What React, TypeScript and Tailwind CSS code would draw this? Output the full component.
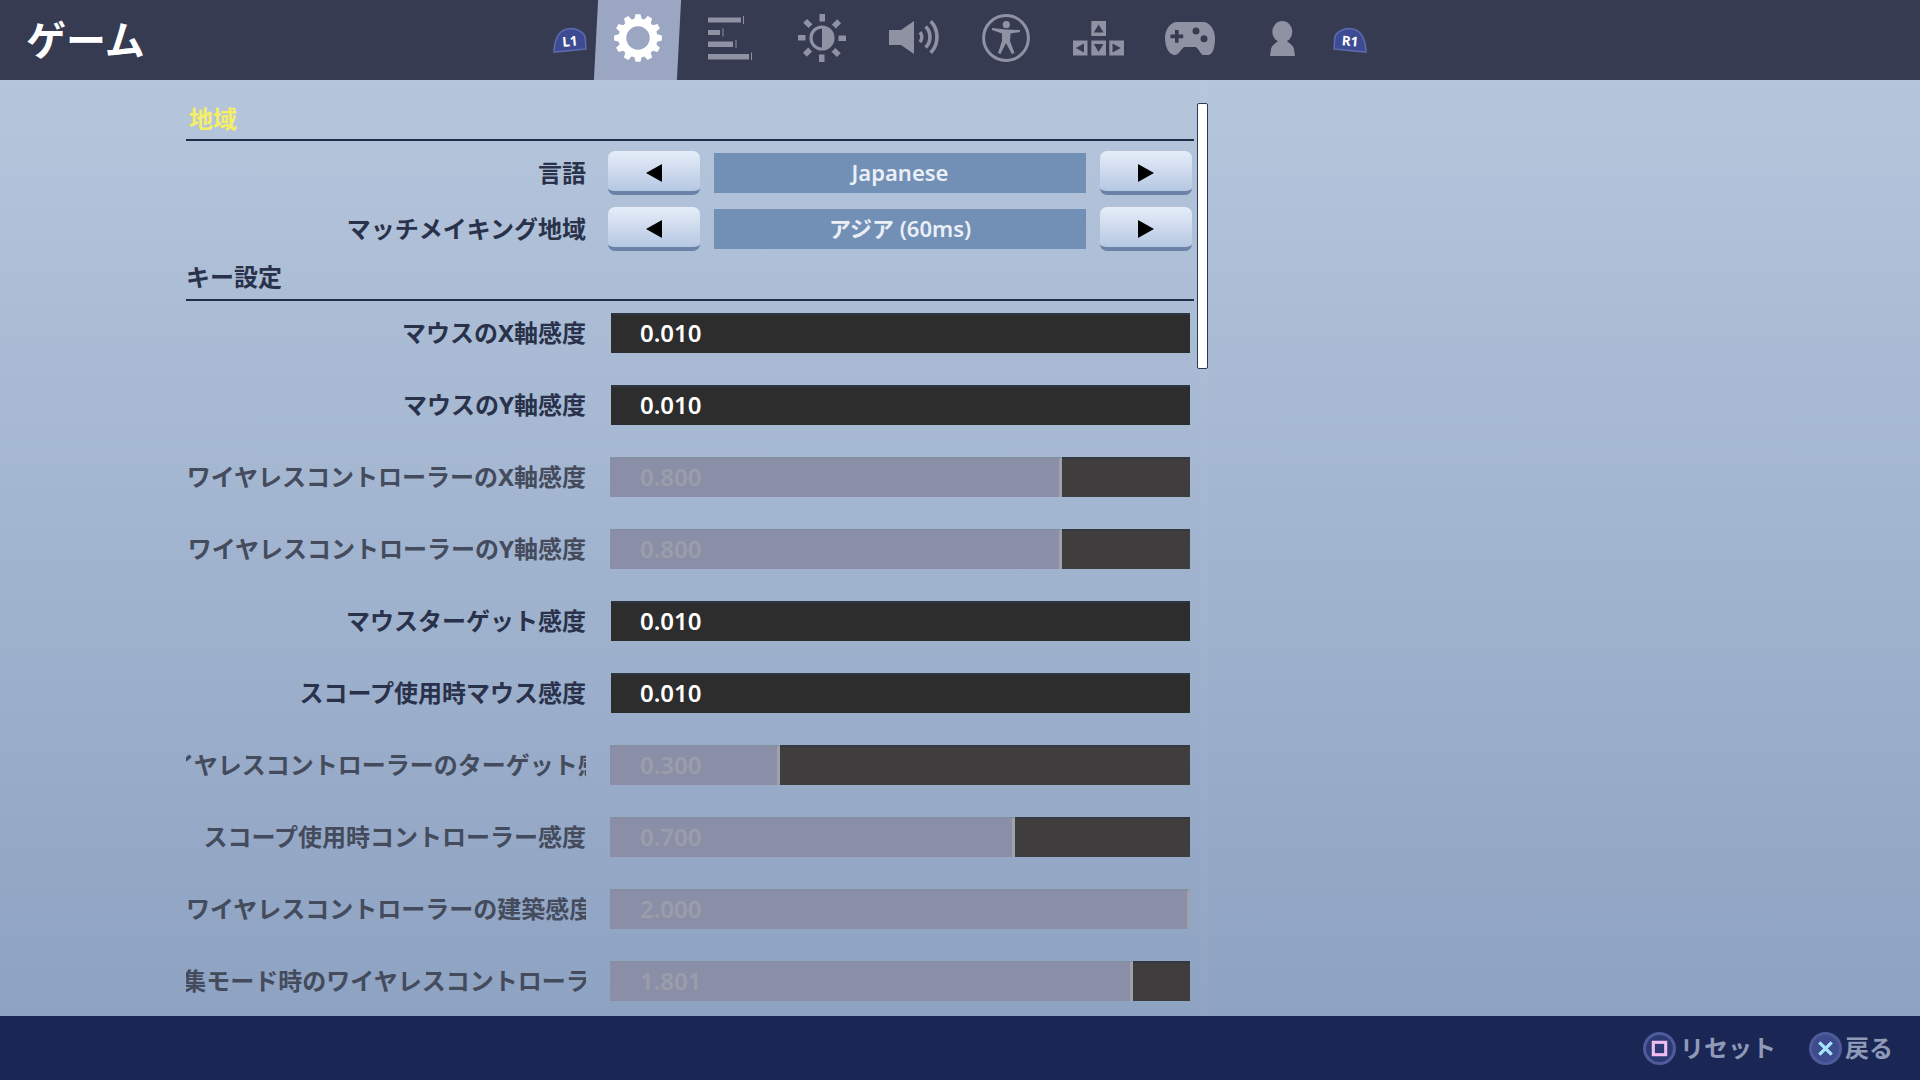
import React from "react";

const IC = "#8f92a3";
const HD = "#363b52";

function gearPath() {
  const teeth = 12;
  const c = 24;
  const ro = 24;
  const rr = 19.5;
  const pts: string[] = [];
  for (let i = 0; i < teeth; i++) {
    const a = (i / teeth) * Math.PI * 2;
    const s = (Math.PI * 2) / teeth;
    const seq: [number, number][] = [
      [rr, a - s * 0.36],
      [ro, a - s * 0.2],
      [ro, a + s * 0.2],
      [rr, a + s * 0.36],
    ];
    for (const [r, t] of seq) {
      pts.push(`${(c + r * Math.cos(t)).toFixed(2)} ${(c + r * Math.sin(t)).toFixed(2)}`);
    }
  }
  const hole = 11.7;
  return `M${pts.join(" L")} Z M${c - hole} ${c} a${hole} ${hole} 0 1 0 ${hole * 2} 0 a${hole} ${hole} 0 1 0 ${-hole * 2} 0 Z`;
}

const GearIcon = () => (
  <svg width="48" height="48" viewBox="0 0 48 48">
    <path d={gearPath()} fill="#ffffff" fillRule="evenodd" />
  </svg>
);

const BarsIcon = () => (
  <svg width="44" height="44" viewBox="0 0 44 44" fill={IC}>
    <rect x="0" y="1.5" width="33" height="5" />
    <rect x="35" y="0" width="1" height="8" />
    <rect x="0" y="14" width="12" height="5" />
    <rect x="14.5" y="12.5" width="1" height="8" />
    <rect x="0" y="25.5" width="25" height="5.5" />
    <rect x="27.5" y="24" width="1" height="8" />
    <rect x="0" y="38" width="41" height="5.5" />
    <rect x="43" y="36.5" width="1" height="7.5" />
  </svg>
);

const SunIcon = () => (
  <svg width="48" height="48" viewBox="0 0 48 48" fill={IC}>
    {[0, 45, 90, 135, 180, 225, 270, 315].map((d) => (
      <rect key={d} x="21.5" y="0" width="5.5" height="7.5" transform={`rotate(${d} 24 24)`} />
    ))}
    <circle cx="24" cy="24" r="11" fill="none" stroke={IC} strokeWidth="3.2" />
    <path d="M24 13 a11 11 0 0 1 0 22 Z" />
  </svg>
);

const SpeakerIcon = () => (
  <svg width="54" height="36" viewBox="0 0 54 36" fill="none">
    <path d="M0 10 H12 L25 1 V34 L12 25 H0 Z" fill={IC} />
    <g stroke={IC} strokeWidth="3.6">
      <path d="M31 12 A8 8 0 0 1 31 22" />
      <path d="M36.6 6.4 A15 15 0 0 1 36.6 27.6" />
      <path d="M41.7 1.2 A23 23 0 0 1 41.7 32.8" />
    </g>
  </svg>
);

const AccessIcon = () => (
  <svg width="48" height="48" viewBox="0 0 48 48" fill={IC}>
    <circle cx="24" cy="24" r="22.4" fill="none" stroke={IC} strokeWidth="3" />
    <circle cx="24.3" cy="10.7" r="3.6" />
    <polygon points="10,14 24,15.5 38,16 38,18 28.5,19.5 28,27 32.5,39 29.8,40 24,29 18.5,40 16,39 20,27 20,19.5 10,16" />
  </svg>
);

const ArrowsIcon = () => (
  <svg width="51" height="35" viewBox="0 0 51 35" fill={IC}>
    <rect x="18.3" y="0" width="14.7" height="15" />
    <rect x="0" y="19.5" width="14.5" height="15" />
    <rect x="18.3" y="19.5" width="14.7" height="15" />
    <rect x="36.3" y="19.5" width="14.7" height="15" />
    <polygon points="25.6,3.5 30.5,11.5 20.8,11.5" fill={HD} />
    <polygon points="2.8,27 11,22.5 11,31.5" fill={HD} />
    <polygon points="20.8,23 30.5,23 25.6,31" fill={HD} />
    <polygon points="47.8,27 39.5,22.5 39.5,31.5" fill={HD} />
  </svg>
);

const PadIcon = () => (
  <svg width="50" height="35" viewBox="0 0 50 35">
    <path
      d="M12 1 H38 C45 1 50 9 50 17 C50 26 48 34 43 34 H38 C36 34 33 26 30 26 H20 C17 26 14 34 10 34 C4 34 0 26 0 17 C0 9 5 1 12 1 Z"
      fill={IC}
    />
    <path d="M10 9 h3.6 v4.6 h4.6 v3.6 h-4.6 v4.6 h-3.6 v-4.6 h-4.6 v-3.6 h4.6 Z" fill={HD} />
    <circle cx="31" cy="10" r="3.5" fill={HD} />
    <circle cx="39" cy="17.7" r="3.5" fill={HD} />
  </svg>
);

const PersonIcon = () => (
  <svg width="25" height="35" viewBox="0 0 25 35" fill={IC}>
    <ellipse cx="12.3" cy="10.7" rx="10" ry="10.7" />
    <path d="M0 35 L1 28 C2 24 5 23 8 20 H17 C20 23 23 24 24 28 L25 35 Z" />
  </svg>
);

const Badge = ({ label, flip }: { label: string; flip?: boolean }) => (
  <svg width="34" height="26" viewBox="0 0 34 26" className="shrink-0">
    <path
      d="M1 25 C1.5 14 5 4 14 2 C22 0.5 29 4 32 9 L33 22 Z"
      fill="#3d4b92"
      stroke="#5d69aa"
      strokeWidth="1.6"
      transform={flip ? "translate(34 0) scale(-1 1)" : undefined}
    />
    <text
      x="17"
      y="19"
      textAnchor="middle"
      fontSize="13.5"
      fontWeight="700"
      fill="#ffffff"
      fontFamily="'Noto Sans', sans-serif"
      transform={flip ? "rotate(5 17 15)" : "rotate(-5 17 15)"}
    >
      {label}
    </text>
  </svg>
);

const Arrow = ({ right }: { right?: boolean }) => (
  <svg width="16" height="18" viewBox="0 0 16 18">
    <polygon points={right ? "0,0 16,9 0,18" : "16,0 0,9 16,18"} fill="#000000" />
  </svg>
);

const StepButton = ({ right }: { right?: boolean }) => (
  <div className="w-[92px] h-[44px] shrink-0 flex items-center justify-center pt-[3px] rounded-[7px] bg-gradient-to-b from-[#e6edf8] to-[#b6c8e3] border-b-[4px] border-b-[#6a81a8]">
    <Arrow right={right} />
  </div>
);

type Align = "end" | "center" | "start";

const Label = ({ text, dim, align = "end" }: { text: string; dim?: boolean; align?: Align }) => (
  <div
    className={`w-[400px] shrink-0 overflow-hidden flex ${
      align === "center" ? "justify-center" : align === "start" ? "justify-start" : "justify-end"
    } text-[24px] leading-[40px] font-bold whitespace-nowrap ${dim ? "text-[#444b5c]" : "text-[#29324a]"}`}
  >
    <span className="shrink-0">{text}</span>
  </div>
);

const SelectRow = ({ label, value }: { label: string; value: string }) => (
  <div className="flex items-start h-[44px]">
    <div className="h-[44px] flex items-center">
      <Label text={label} />
    </div>
    <div className="ml-[22px] flex items-start gap-[14px]">
      <StepButton />
      <div className="w-[372px] h-[40px] mt-[2px] pb-[2px] flex items-center justify-center bg-[#7290b6] text-[#eaeff6] text-[22px] font-semibold">
        {value}
      </div>
      <StepButton right />
    </div>
  </div>
);

type Slider = { label: string; value: string; fill?: number; align?: Align };

const sliders: Slider[] = [
  { label: "マウスのX軸感度", value: "0.010" },
  { label: "マウスのY軸感度", value: "0.010" },
  { label: "ワイヤレスコントローラーのX軸感度", value: "0.800", fill: 452 },
  { label: "ワイヤレスコントローラーのY軸感度", value: "0.800", fill: 452 },
  { label: "マウスターゲット感度", value: "0.010" },
  { label: "スコープ使用時マウス感度", value: "0.010" },
  { label: "ワイヤレスコントローラーのターゲット感度", value: "0.300", fill: 170, align: "center" },
  { label: "スコープ使用時コントローラー感度", value: "0.700", fill: 405 },
  { label: "ワイヤレスコントローラーの建築感度", value: "2.000", fill: 580, align: "start" },
  { label: "建物編集モード時のワイヤレスコントローラー感度", value: "1.801", fill: 523, align: "center" },
];

const SliderRow = ({ s }: { s: Slider }) => {
  const dim = s.fill !== undefined;
  return (
    <div className="flex items-center h-[40px] shrink-0">
      <Label text={s.label} dim={dim} align={s.align} />
      {dim ? (
        <div className="relative ml-[24px] w-[580px] h-[40px] flex">
          <div
            className="h-full shrink-0 bg-[#8a8fa7] border-t-[2px] border-t-[#84909f] border-r-[3px] border-r-[#a0a2ab]"
            style={{ width: s.fill }}
          />
          <div className="flex-1 h-full bg-[#3f3d3e] border-t-[2px] border-t-[#34383f]" />
          <span className="absolute left-[30px] top-0 leading-[40px] text-[24px] font-semibold text-[#9a9eab]">{s.value}</span>
        </div>
      ) : (
        <div className="ml-[25px] w-[579px] h-[40px] flex items-center pl-[29px] pb-[2px] bg-[#2d2d2d] border-t-[2px] border-t-[#2f3540] text-white text-[24px] font-semibold">
          {s.value}
        </div>
      )}
    </div>
  );
};

const SectionHeader = ({ text, active, className }: { text: string; active?: boolean; className: string }) => (
  <div
    className={`flex items-center border-b-2 border-b-[#1f2d48] text-[24px] font-bold ${
      active ? "text-[#f5ee66] pl-[3px]" : "text-[#29324a]"
    } ${className}`}
  >
    {text}
  </div>
);

const slots = [BarsIcon, SunIcon, SpeakerIcon, AccessIcon, ArrowsIcon, PadIcon, PersonIcon];

export default function App() {
  return (
    <div className="w-screen h-screen overflow-hidden flex flex-col [font-family:'Noto_Sans','Noto_Sans_CJK_JP',sans-serif]">
      <header className="h-[80px] shrink-0 flex items-center bg-[#363b52]">
        <div className="w-[553px] shrink-0 pl-[26px] text-white text-[40px] font-bold leading-[80px]">ゲーム</div>
        <Badge label="L1" />
        <div className="flex items-stretch h-[80px] ml-[5px]">
          <div className="relative w-[92px] h-full flex items-center justify-center pb-[4px]">
            <div className="absolute top-0 bottom-0 left-[4px] w-[83px] bg-[#9aa6c2] -skew-x-[3deg]" />
            <div className="relative flex">
              <GearIcon />
            </div>
          </div>
          {slots.map((Icon, i) => (
            <div
              key={i}
              className={`w-[92px] h-full flex items-center justify-center pb-[4px] ${i === 2 ? "pl-[3px]" : ""}`}
            >
              <Icon />
            </div>
          ))}
        </div>
        <div className="ml-[5px] flex">
          <Badge label="R1" flip />
        </div>
      </header>

      <main className="relative flex-1 min-h-0 overflow-hidden pl-[186px] bg-gradient-to-b from-[#b5c6dc] to-[#8ea2c2]">
        <div className="w-[1008px] flex flex-col">
          <SectionHeader text="地域" active className="h-[45px] mt-[16px] pt-[2px]" />
          <div className="flex flex-col gap-[12px] mt-[10px]">
            <SelectRow label="言語" value="Japanese" />
            <SelectRow label="マッチメイキング地域" value="アジア (60ms)" />
          </div>
          <SectionHeader text="キー設定" className="h-[46px] mt-[4px]" />
          <div className="flex flex-col gap-[32px] mt-[12px]">
            {sliders.map((s) => (
              <SliderRow key={s.label} s={s} />
            ))}
          </div>
        </div>
        <div className="absolute left-[1200px] top-0 bottom-0 w-[7px] bg-white/[0.03]" />
        <div className="absolute left-[1197px] top-[23px] w-[11px] h-[266px] rounded-[2px] bg-white border border-[#2a3a55]" />
      </main>

      <footer className="h-[64px] shrink-0 flex items-center justify-end gap-[33px] pr-[27px] bg-[#1a2654] text-[#8e9ab8] text-[24px] font-bold">
        <div className="flex items-center gap-[4px]">
          <svg width="33" height="33" viewBox="0 0 32 32">
            <circle cx="16" cy="16" r="14.5" fill="#2c3a74" stroke="#4e5a9a" strokeWidth="3" />
            <rect x="10" y="10" width="12" height="12" fill="none" stroke="#f0bdf0" strokeWidth="3" />
          </svg>
          <span>リセット</span>
        </div>
        <div className="flex items-center gap-[3px]">
          <svg width="33" height="33" viewBox="0 0 32 32">
            <circle cx="16" cy="16" r="14.5" fill="#3c4c8e" stroke="#4e5a9a" strokeWidth="3" />
            <path d="M10 10 L22 22 M22 10 L10 22" stroke="#a6e4fb" strokeWidth="3.2" />
          </svg>
          <span>戻る</span>
        </div>
      </footer>
    </div>
  );
}
